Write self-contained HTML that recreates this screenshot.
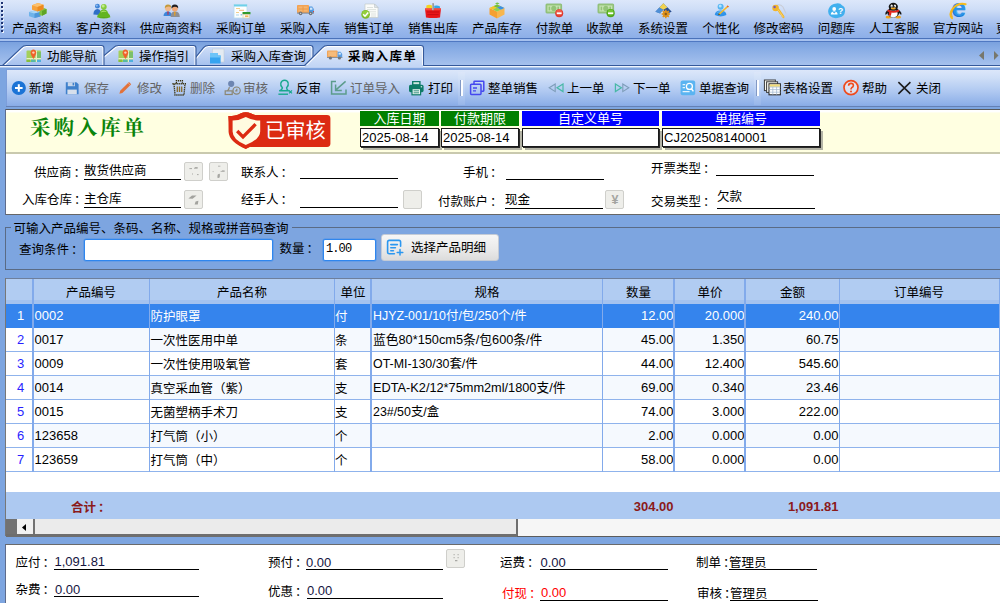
<!DOCTYPE html>
<html lang="zh-CN">
<head>
<meta charset="utf-8">
<title>采购入库单</title>
<style>
*{box-sizing:border-box;margin:0;padding:0}
html,body{width:1000px;height:603px;overflow:hidden}
body{position:relative;background:#7da5e0;font-family:"Liberation Sans","Noto Sans CJK SC",sans-serif;font-size:12.5px;color:#000;line-height:16px}
div,span,svg{position:absolute}
.t{white-space:nowrap;height:16px;line-height:16px}
.c{transform:translateX(-50%)}
.r{transform:translateX(-100%)}
#top{left:0;top:0;width:1000px;height:38px;background:linear-gradient(#dce7fa 0,#cfdef7 9px,#b3caf1 19px,#9bb9ec 28px,#8dafe8 38px)}
#tabbar{left:0;top:42px;width:1000px;height:25px;background:linear-gradient(#7aa1de 0,#86abe4 6px,#a7c2ee 24px)}
#tb2{left:5.5px;top:68.8px;width:994.5px;height:36.8px;background:linear-gradient(#dce7fa 0,#cedef7 8px,#b0c9f1 21px,#91b2e9 33px,#87aae5 36.6px);border-left:1px solid #7c9edb;border-top:1px solid #7c9edb}
.g{color:#646464}
.ul{height:1px;background:#000}
.sb{width:19.4px;height:19px;background:#eeeeea;border:1px solid #cfcfcb;border-radius:2px}
.hd{height:15px;color:#fff;text-align:center;line-height:15.4px;font-size:13px;overflow:hidden}
.in{height:19px;background:#fff;border:1px solid #1a1a1a;box-shadow:1px 1px 0 #2a2a2a, 3px 3px 0 #b4b4a6;font-size:13px;line-height:17px;padding-left:1px;white-space:nowrap}
.gl{background:#8fb3ec}
.n{font-size:13px}
i{position:static;font-style:normal;margin-left:2px}
</style>
</head>
<body>
<div id="top"></div>
<div style="left:0px;top:38px;width:1000px;height:1px;background:#4a72ba;"></div>
<div style="left:0px;top:39px;width:1000px;height:2px;background:#a6c1ee;"></div>
<div style="left:0px;top:41px;width:1000px;height:1px;background:#4f78c2;"></div>
<div style="left:2px;top:3px;width:2px;height:2px;background:#eef3fc;"></div>
<div style="left:1px;top:2px;width:2px;height:2px;background:#1f3474;"></div>
<div style="left:2px;top:7px;width:2px;height:2px;background:#eef3fc;"></div>
<div style="left:1px;top:6px;width:2px;height:2px;background:#1f3474;"></div>
<div style="left:2px;top:11px;width:2px;height:2px;background:#eef3fc;"></div>
<div style="left:1px;top:10px;width:2px;height:2px;background:#1f3474;"></div>
<div style="left:2px;top:15px;width:2px;height:2px;background:#eef3fc;"></div>
<div style="left:1px;top:14px;width:2px;height:2px;background:#1f3474;"></div>
<div style="left:2px;top:19px;width:2px;height:2px;background:#eef3fc;"></div>
<div style="left:1px;top:18px;width:2px;height:2px;background:#1f3474;"></div>
<div style="left:2px;top:23px;width:2px;height:2px;background:#eef3fc;"></div>
<div style="left:1px;top:22px;width:2px;height:2px;background:#1f3474;"></div>
<div style="left:2px;top:27px;width:2px;height:2px;background:#eef3fc;"></div>
<div style="left:1px;top:26px;width:2px;height:2px;background:#1f3474;"></div>
<div style="left:2px;top:31px;width:2px;height:2px;background:#eef3fc;"></div>
<div style="left:1px;top:30px;width:2px;height:2px;background:#1f3474;"></div>
<span class="t c" style="left:37px;top:21px;">产品资料</span>
<span class="t c" style="left:101px;top:21px;">客户资料</span>
<span class="t c" style="left:171px;top:21px;">供应商资料</span>
<span class="t c" style="left:241px;top:21px;">采购订单</span>
<span class="t c" style="left:305px;top:21px;">采购入库</span>
<span class="t c" style="left:369px;top:21px;">销售订单</span>
<span class="t c" style="left:433px;top:21px;">销售出库</span>
<span class="t c" style="left:497px;top:21px;">产品库存</span>
<span class="t c" style="left:554.5px;top:21px;">付款单</span>
<span class="t c" style="left:605px;top:21px;">收款单</span>
<span class="t c" style="left:663px;top:21px;">系统设置</span>
<span class="t c" style="left:721px;top:21px;">个性化</span>
<span class="t c" style="left:778.5px;top:21px;">修改密码</span>
<span class="t c" style="left:836.5px;top:21px;">问题库</span>
<span class="t c" style="left:894px;top:21px;">人工客服</span>
<span class="t c" style="left:958px;top:21px;">官方网站</span>
<span class="t " style="left:996px;top:21px;">更多</span>
<svg style="left:28px;top:2px" width="20" height="17" viewBox="0 0 20 17">
<path d="M1 10 L7 8.5 L12.5 10 L12.5 14.5 L6.5 16 L1 14.2Z" fill="#6fb3ea"/><path d="M1 10 L7 8.5 L12.5 10 L6.5 11.6Z" fill="#a8d6f7"/><path d="M6.5 11.6 L12.5 10 L12.5 14.5 L6.5 16Z" fill="#4f97d9"/>
<path d="M11.5 8 L16 6 L18.5 7 L18.5 11.5 L14 13.8 L11.5 13Z" fill="#7fc241"/><path d="M14 9 L18.5 7 L18.5 11.5 L14 13.8Z" fill="#5fa427"/>
<path d="M4 3.2 L10 1 L15.5 2.8 L15.5 7.2 L9.5 9.6 L4 7.8Z" fill="#f6a23c"/><path d="M4 3.2 L10 1 L15.5 2.8 L9.5 5Z" fill="#fbc06e"/><path d="M9.5 5 L15.5 2.8 L15.5 7.2 L9.5 9.6Z" fill="#ec8a1e"/>
</svg>
<svg style="left:92px;top:2px" width="20" height="17" viewBox="0 0 20 17">
<circle cx="5.4" cy="4.2" r="2.4" fill="#3f83d6"/><circle cx="4.8" cy="3.6" r="1.1" fill="#8ebcf0"/><path d="M1.4 12.4 Q1.6 7.2 5.4 7 Q7.8 7.2 8.4 9 L7.4 13Z" fill="#2f6fc6"/>
<circle cx="11.8" cy="4.8" r="2.9" fill="#86cb3c"/><circle cx="11.2" cy="4" r="1.5" fill="#c0ea8a"/>
<path d="M11.8 7.4 Q8.2 7.6 7.6 11 Q5 13 5 15.2 Q11.8 17.8 18.4 15.2 Q18.4 13 16 11 Q15.4 7.6 11.8 7.4Z" fill="#63b421"/><path d="M8.6 10.6 Q9.4 8.4 11.8 8.4 Q14 8.4 14.8 10 Q11.6 9.2 8.6 10.6Z" fill="#a9e06a"/><path d="M6 14.8 Q11.8 16.8 17.4 14.8 Q11.8 15.8 6 14.8Z" fill="#4a9614"/>
</svg>
<svg style="left:162px;top:3px" width="20" height="16" viewBox="0 0 20 16">
<path d="M1.5 13 Q1.8 8.4 6 8.4 Q9.6 8.4 10 13Z" fill="#3c86da"/>
<circle cx="6" cy="5.2" r="3" fill="#f0b98a"/><path d="M2.8 5.2 Q2.6 1.4 6 1.4 Q9.4 1.4 9.2 4.6 Q7 2.8 4.4 4 Z" fill="#c39a3c"/>
<path d="M5.2 8.6 L6.8 8.6 L6.4 12 L5.6 12Z" fill="#c2304a"/>
<path d="M8.6 14 Q8.8 8.6 13 8.6 Q17.6 8.6 17.8 14Z" fill="#8d8f94"/>
<circle cx="12.8" cy="5.6" r="3" fill="#f0a878"/><path d="M9.4 5.4 Q9.2 1.6 12.8 1.6 Q16.4 1.6 16.2 5.2 Q13.8 3.2 11 4.2Z" fill="#1f1f22"/>
<path d="M12 8.8 L13.6 8.8 L13.2 13 L12.4 13Z" fill="#e8a020"/>
</svg>
<svg style="left:233px;top:3px" width="18" height="16" viewBox="0 0 18 16">
<rect x="1" y="1.5" width="13" height="13.5" fill="#fdfefe" stroke="#b8dced" stroke-width=".8"/><rect x="1" y="1.5" width="13" height="2" fill="#6fd0ea"/>
<rect x="3" y="5" width="4" height="1" fill="#f3cf8c"/><rect x="6" y="6.8" width="5" height="1" fill="#f0b878"/><rect x="3" y="9" width="3" height="1" fill="#f3cf8c"/><rect x="3" y="11.5" width="3" height="1" fill="#a9d5ee"/><rect x="7.6" y="11" width="1.5" height="1.5" fill="#8ecbe8"/>
<rect x="9.5" y="9" width="8" height="2.4" rx=".6" fill="#2f9a2c"/><rect x="10" y="11.4" width="6.5" height="3.6" fill="#fbfbf3" stroke="#d9c89c" stroke-width=".6"/><rect x="12" y="12.4" width="3.4" height="1.6" fill="#f2b45c"/>
</svg>
<svg style="left:296px;top:4px" width="19" height="12" viewBox="0 0 19 12">
<rect x="1" y="1" width="12" height="8" rx=".8" fill="#f2a253"/><rect x="2.4" y="2.4" width="9.2" height="5.2" fill="#f6b56f"/><path d="M2.4 5 H11.6 M7 2.4 V7.6" stroke="#ea9540" stroke-width=".8"/>
<path d="M13 2.6 H16.2 L17.8 5 V9 H13Z" fill="#4f97e0"/><rect x="14" y="3.6" width="2.4" height="2.2" fill="#cfe6fb"/><rect x="17" y="7" width="1" height="1.2" fill="#e2452f"/>
<rect x="1" y="8.6" width="17" height="1" fill="#7c8794"/><circle cx="4.6" cy="9.4" r="1.8" fill="#6f7378"/><circle cx="14.6" cy="9.4" r="1.8" fill="#6f7378"/><circle cx="4.6" cy="9.4" r=".7" fill="#c9cdd2"/><circle cx="14.6" cy="9.4" r=".7" fill="#c9cdd2"/>
</svg>
<svg style="left:360px;top:3px" width="20" height="16" viewBox="0 0 20 16">
<path d="M5 1 H14.5 L18 4.5 V14.5 H5Z" fill="#fbfcfa" stroke="#c4cbc8" stroke-width=".7"/><path d="M14.5 1 V4.5 H18Z" fill="#dfe5e8" stroke="#b4bdc3" stroke-width=".5"/>
<path d="M7 4.5 H13 M7 6.6 H16 M9 8.8 H16 M11 11 H16 M11 13 H16" stroke="#d9dfda" stroke-width=".9"/>
<circle cx="5.6" cy="11.4" r="4.3" fill="#7db92b"/><circle cx="5.6" cy="10.8" r="3.4" fill="#94cf3d"/><path d="M3.2 11.2 L5 13.2 L8.2 9.4" fill="none" stroke="#fff" stroke-width="1.5"/>
</svg>
<svg style="left:424px;top:2px" width="18" height="17" viewBox="0 0 18 17">
<path d="M2.2 6.4 L2.4 3.6 Q5 2.2 8 3.4 L8 6.4Z" fill="#f5d421"/><path d="M10.2 6.4 L10.2 3.8 Q13.4 2.8 16 4.4 L16 6.4Z" fill="#35a7e6"/>
<path d="M1 6.4 H17 L16 15.4 Q9 16.8 2 15.4Z" fill="#e8171b"/><path d="M1 6.4 H17 L16.8 8.2 H1.2Z" fill="#f64a3c"/><path d="M3 10 H15 M3.4 12.6 H14.6" stroke="#c90e12" stroke-width="1"/>
<rect x="8" y="1" width="2" height="7.4" rx=".8" fill="#8c9096"/><rect x="8.4" y="1" width=".8" height="7" fill="#c4c8cc"/>
</svg>
<svg style="left:488px;top:2px" width="18" height="17" viewBox="0 0 18 17">
<path d="M1.5 6 L9 9.4 L9 16.4 L1.5 12.6Z" fill="#f5a032"/><path d="M9 9.4 L16.5 6 L16.5 12.6 L9 16.4Z" fill="#f8b64e"/>
<path d="M1.5 6 L9 2.4 L16.5 6 L9 9.4Z" fill="#f2d548"/>
<path d="M5.4 4.2 L9 2.4 L12.4 4 L8.8 5.8Z" fill="#6fc13c"/><path d="M8.8 5.8 L12.4 4 L16.5 6 L12.8 7.8Z" fill="#3b8fe4"/><path d="M1.5 6 L5.4 4.2 L8.8 5.8 L5 7.6Z" fill="#f0c530"/><path d="M5 7.6 L8.8 5.8 L12.8 7.8 L9 9.4Z" fill="#8fd052"/>
<path d="M7 1.2 L9.4 .4 L11.6 1.4 L9.2 2.4Z" fill="#73c445"/>
</svg>
<svg style="left:545px;top:3px" width="19" height="15" viewBox="0 0 19 15"><rect x="1" y="1" width="15.6" height="9" rx=".8" fill="#9fcb86" stroke="#82b566" stroke-width=".8"/><rect x="2.5" y="2.6" width="12.6" height="5.8" fill="#c8e4b4"/><ellipse cx="8.8" cy="5.5" rx="2.6" ry="2.8" fill="#93c478"/><rect x="3.6" y="3.6" width="1.6" height="3.8" fill="#93c478"/><rect x="12.4" y="3.6" width="1.6" height="3.8" fill="#93c478"/><circle cx="14.2" cy="10.2" r="4" fill="#e0382c"/><circle cx="14.2" cy="9.6" r="3" fill="#ee5a48"/><rect x="11.8" y="9.4" width="4.8" height="1.7" fill="#fff"/></svg>
<svg style="left:597px;top:3px" width="19" height="15" viewBox="0 0 19 15"><rect x="1" y="1" width="15.6" height="9" rx=".8" fill="#9fcb86" stroke="#82b566" stroke-width=".8"/><rect x="2.5" y="2.6" width="12.6" height="5.8" fill="#c8e4b4"/><ellipse cx="8.8" cy="5.5" rx="2.6" ry="2.8" fill="#93c478"/><rect x="3.6" y="3.6" width="1.6" height="3.8" fill="#93c478"/><rect x="12.4" y="3.6" width="1.6" height="3.8" fill="#93c478"/><circle cx="13.6" cy="10.2" r="4.1" fill="#4fa51c"/><circle cx="13.6" cy="9.6" r="3" fill="#74c634"/><rect x="11" y="9.4" width="5.2" height="1.7" fill="#fff"/></svg>
<svg style="left:654px;top:2px" width="19" height="17" viewBox="0 0 19 17">
<path d="M9.4 1.2 L17.6 9.8 L9.4 12.6 L1.4 9.8Z" fill="#3f6fb4"/>
<path d="M9.4 1.2 L13.4 5.4 L9.4 8 L5.4 5.4Z" fill="#f2d34e"/><path d="M5.4 5.4 L9.4 8 L6 11.4 L1.4 9.8Z" fill="#4f8fd6"/><path d="M13.4 5.4 L17.6 9.8 L12.6 11.4 L9.4 8Z" fill="#2d4f8e"/><path d="M9.4 8 L12.6 11.4 L9.4 12.6 L6 11.4Z" fill="#d9dde6"/>
<circle cx="11.8" cy="12" r="3.1" fill="#e0921c"/><path d="M11.8 7.8 V16.2 M7.6 12 H16 M8.8 9 L14.8 15 M14.8 9 L8.8 15" stroke="#e0921c" stroke-width="1.5"/><circle cx="11.8" cy="12" r="1.2" fill="#8a5a18"/>
</svg>
<svg style="left:713px;top:3px" width="17" height="15" viewBox="0 0 17 15">
<circle cx="7.6" cy="3.8" r="3" fill="#52b4f2"/><circle cx="7.2" cy="3" r="1.5" fill="#b5e2fb"/>
<path d="M1.8 12 Q2 7.4 7.6 7.4 Q13.2 7.4 13.4 12 Q7.6 14.8 1.8 12Z" fill="#2f93ea"/><path d="M3.4 10 Q4.4 8.2 7.6 8.2 Q10 8.2 11 9.2 Q7 8.8 3.4 10Z" fill="#7cc6f6"/>
<path d="M14.6 2.4 L15.8 3.6 L7 11.6 L5.2 12.2 L5.8 10.4Z" fill="#f4b928"/><path d="M14.6 2.4 L15.8 3.6 L15 4.4 L13.8 3.2Z" fill="#e8552e"/><path d="M5.8 10.4 L7 11.6 L5.2 12.2Z" fill="#3b3320"/>
</svg>
<svg style="left:770px;top:3px" width="17" height="16" viewBox="0 0 17 16">
<path d="M6 2.4 Q10 .6 13 4 L16 10.4" fill="none" stroke="#c9ccd6" stroke-width="1.1"/>
<circle cx="5.6" cy="5" r="3.3" fill="#f2b52a"/><circle cx="4.6" cy="4" r="1.2" fill="#7c5ab8"/>
<path d="M7 6.8 L9 5.4 L14.4 13.2 L14.2 15.2 L12.4 15 L12.6 13.8 L11.2 13.6 L11.4 12 L10 11.6Z" fill="#f2b52a"/><path d="M8 6.6 L13.4 14.2" stroke="#f8d878" stroke-width=".8"/>
</svg>
<svg style="left:827px;top:2px" width="19" height="17" viewBox="0 0 19 17">
<path d="M9.4 1.4 Q13.4 .8 15.2 3.6 Q18.6 5.2 18 9.6 Q17.6 14.4 12.4 15.6 Q6.4 17.2 3 14 Q0 10.6 1.8 6.4 Q3.6 1.8 9.4 1.4Z" fill="#41b0ee"/>
<circle cx="7.2" cy="7" r="1.9" fill="#fff"/><path d="M3.8 12.4 Q3.8 9.4 7.2 9.4 Q10.6 9.4 10.6 12.4Z" fill="#fff"/><path d="M5.6 10 L7.2 11.4 L8.8 10Z" fill="#41b0ee"/>
<text x="11" y="12.4" font-family="Liberation Sans" font-weight="bold" font-size="8.5" fill="#fff">?</text>
</svg>
<svg style="left:884px;top:2px" width="19" height="17" viewBox="0 0 19 17">
<ellipse cx="4.4" cy="15.2" rx="2.8" ry="1.4" fill="#f3a41c"/><ellipse cx="14.2" cy="15.2" rx="2.8" ry="1.4" fill="#f3a41c"/>
<path d="M3.2 8 Q.8 10.6 1.6 13 Q3 12.2 4.2 10Z" fill="#161616"/><path d="M15.4 8 Q18 10.6 17.2 13 Q15.6 12.2 14.6 10Z" fill="#161616"/>
<ellipse cx="9.3" cy="10.4" rx="5.9" ry="5.2" fill="#151515"/><ellipse cx="9.3" cy="11.6" rx="4.3" ry="3.8" fill="#fdfdfd"/>
<ellipse cx="9.3" cy="4.8" rx="4.6" ry="4" fill="#151515"/>
<ellipse cx="7.7" cy="4" rx="1.1" ry="1.5" fill="#fff"/><ellipse cx="10.9" cy="4" rx="1.1" ry="1.5" fill="#fff"/><circle cx="8" cy="4.2" r=".5" fill="#111"/><circle cx="10.6" cy="4.2" r=".5" fill="#111"/>
<ellipse cx="9.3" cy="6.5" rx="2.5" ry=".9" fill="#f3a41c"/>
<path d="M3.8 7.6 Q9.3 10.4 14.8 7.6 L15.2 9.4 Q9.3 12.2 3.4 9.4Z" fill="#e1241c"/><path d="M5.2 9.6 L7.6 10.4 L6.8 14 L4.6 13Z" fill="#e1241c"/>
</svg>
<svg style="left:949px;top:2px" width="19" height="18" viewBox="0 0 19 18">
<text x="2.2" y="15" font-family="Liberation Sans,sans-serif" font-weight="bold" font-size="26.5" fill="#1878d8">e</text>
<text x="3.4" y="14" font-family="Liberation Sans,sans-serif" font-weight="bold" font-size="24" fill="#39a8f2" opacity=".6">e</text>
<path d="M3 16.2 Q-.4 12.2 3.6 6.8 Q9 .4 16.6 2.2" fill="none" stroke="#f5bb1c" stroke-width="2" stroke-linecap="round"/>
<path d="M3.4 15.2 Q1 12 4.4 7.4" fill="none" stroke="#e9a010" stroke-width=".8"/>
</svg>
<div id="tabbar"></div>
<svg style="left:0;top:41px" width="1000" height="28" viewBox="0 0 1000 28"><defs><linearGradient id="ti" x1="0" y1="0" x2="0" y2="1"><stop offset="0" stop-color="#d0dff8"/><stop offset="1" stop-color="#a6c1ee"/></linearGradient><linearGradient id="ta" x1="0" y1="0" x2="0" y2="1"><stop offset="0" stop-color="#e6eefc"/><stop offset="1" stop-color="#c3d6f5"/></linearGradient></defs><path d="M189 24.5 L203.5 6.7 Q205.4 4.5 208.4 4.5 L310.5 4.5 Q313 4.5 313 7 L313 24.5 Z" fill="url(#ti)" stroke="none"/><path d="M190.6 24.5 L204.4 7.5 Q206 5.5 208.6 5.5 L310.4 5.5 Q312 5.5 312 7.5 L312 24.5" fill="none" stroke="#fff" stroke-width="1.1"/><path d="M189 24.5 L203.5 6.7 Q205.4 4.5 208.4 4.5 L310.5 4.5 Q313 4.5 313 7 L313 24.5" fill="none" stroke="#35599b" stroke-width="1.1"/><path d="M92 24.5 L113.5 6.7 Q115.4 4.5 118.4 4.5 L193.5 4.5 Q196 4.5 196 7 L196 24.5 Z" fill="url(#ti)" stroke="none"/><path d="M93.6 24.5 L114.4 7.5 Q116 5.5 118.6 5.5 L193.4 5.5 Q195 5.5 195 7.5 L195 24.5" fill="none" stroke="#fff" stroke-width="1.1"/><path d="M92 24.5 L113.5 6.7 Q115.4 4.5 118.4 4.5 L193.5 4.5 Q196 4.5 196 7 L196 24.5" fill="none" stroke="#35599b" stroke-width="1.1"/><path d="M2.5 24.5 L21.5 6.7 Q23.4 4.5 26.4 4.5 L101.5 4.5 Q104 4.5 104 7 L104 24.5 Z" fill="url(#ti)" stroke="none"/><path d="M4.1 24.5 L22.4 7.5 Q24 5.5 26.6 5.5 L101.4 5.5 Q103 5.5 103 7.5 L103 24.5" fill="none" stroke="#fff" stroke-width="1.1"/><path d="M2.5 24.5 L21.5 6.7 Q23.4 4.5 26.4 4.5 L101.5 4.5 Q104 4.5 104 7 L104 24.5" fill="none" stroke="#35599b" stroke-width="1.1"/><rect x="0" y="24" width="1000" height="1.1" fill="#35599b"/><rect x="0" y="25.1" width="1000" height="1.3" fill="#f8fbff"/><path d="M304.5 24.5 L322.5 6.7 Q324.4 4.5 327.4 4.5 L421 4.5 Q423.5 4.5 423.5 7 L423.5 24.5 Z" fill="url(#ta)" stroke="none"/><path d="M306.1 24.5 L323.4 7.5 Q325 5.5 327.6 5.5 L420.9 5.5 Q422.5 5.5 422.5 7.5 L422.5 24.5" fill="none" stroke="#fff" stroke-width="1.1"/><path d="M304.5 24.5 L322.5 6.7 Q324.4 4.5 327.4 4.5 L421 4.5 Q423.5 4.5 423.5 7 L423.5 24.5" fill="none" stroke="#35599b" stroke-width="1.1"/><path d="M306.2 24 H423 V26.4 H304 Z" fill="#c3d6f5"/><path d="M984 10 L979 14.5 L984 19Z" fill="#77776c"/><path d="M994 10 L998.5 14.5 L994 19Z" fill="#77776c"/></svg>
<svg style="left:26px;top:49px" width="16" height="14" viewBox="0 0 16 14"><rect x=".5" y="1.5" width="14.5" height="11.5" rx="1" fill="#a4cf5a"/><rect x=".5" y="9" width="14.5" height="1.6" fill="#e9efc4"/><rect x="9.6" y="1.5" width="1.4" height="11.5" fill="#e9efc4"/><rect x="11" y="3" width="4" height="6" fill="#7cc06a"/><rect x="11" y="10.6" width="4" height="2.4" fill="#4fb0de"/><rect x="5" y="10.6" width="4.6" height="2.4" fill="#58b9a4"/><rect x=".5" y="10.6" width="3.5" height="2.4" fill="#86bf3e"/>
<path d="M7.4 10 Q4.4 5.4 4.6 3.6 Q5 .6 7.4 .6 Q9.8 .6 10.2 3.6 Q10.4 5.4 7.4 10Z" fill="#f0612a"/><circle cx="7.4" cy="3.6" r="1.2" fill="#fbd2b4"/></svg>
<svg style="left:118px;top:49px" width="16" height="14" viewBox="0 0 16 14"><rect x=".5" y="1.5" width="14.5" height="11.5" rx="1" fill="#a4cf5a"/><rect x=".5" y="9" width="14.5" height="1.6" fill="#e9efc4"/><rect x="9.6" y="1.5" width="1.4" height="11.5" fill="#e9efc4"/><rect x="11" y="3" width="4" height="6" fill="#7cc06a"/><rect x="11" y="10.6" width="4" height="2.4" fill="#4fb0de"/><rect x="5" y="10.6" width="4.6" height="2.4" fill="#58b9a4"/><rect x=".5" y="10.6" width="3.5" height="2.4" fill="#86bf3e"/>
<path d="M7.4 10 Q4.4 5.4 4.6 3.6 Q5 .6 7.4 .6 Q9.8 .6 10.2 3.6 Q10.4 5.4 7.4 10Z" fill="#f0612a"/><circle cx="7.4" cy="3.6" r="1.2" fill="#fbd2b4"/></svg>
<svg style="left:209px;top:48px" width="16" height="16" viewBox="0 0 16 16"><rect x="3.4" y="1" width="11.6" height="13" fill="#e4ebf2" stroke="#c2ccd6" stroke-width=".6"/><path d="M1 5 H8.6 V7.4 H11.6 V15.6 H1Z" fill="#36a4f0"/><path d="M1 5 H8.6 V7.4 H11.6 V9.6 H1Z" fill="#6cc4f8"/></svg>
<svg style="left:326px;top:49px" width="18" height="12" viewBox="0 0 18 12"><rect x="1" y="1.4" width="10.6" height="7" rx=".8" fill="#f0a458"/><rect x="2.2" y="2.6" width="8.2" height="4.6" fill="#f6bb7a"/><path d="M11.6 2.8 H14.6 L16.2 5 V8.4 H11.6Z" fill="#5a9de2"/><rect x="12.6" y="3.8" width="2.2" height="1.8" fill="#d8eafb"/><rect x="1" y="8" width="15.4" height=".9" fill="#858c96"/><circle cx="4.4" cy="9" r="1.6" fill="#70757c"/><circle cx="13.4" cy="9" r="1.6" fill="#70757c"/></svg>
<span class="t " style="left:47px;top:49px;">功能导航</span>
<span class="t " style="left:139px;top:49px;">操作指引</span>
<span class="t " style="left:231px;top:49px;">采购入库查询</span>
<span class="t " style="left:348px;top:49px;font-weight:bold;letter-spacing:1.3px">采购入库单</span>
<div id="tb2"></div>
<div style="left:6px;top:105.6px;width:994px;height:1.1px;background:#6480b4;"></div>
<span class="t " style="left:29px;top:81px;">新增</span>
<span class="t g" style="left:84px;top:81px;">保存</span>
<span class="t g" style="left:137px;top:81px;">修改</span>
<span class="t g" style="left:190px;top:81px;">删除</span>
<span class="t g" style="left:243px;top:81px;">审核</span>
<span class="t " style="left:296px;top:81px;">反审</span>
<span class="t g" style="left:350px;top:81px;">订单导入</span>
<span class="t " style="left:428px;top:81px;">打印</span>
<span class="t " style="left:488px;top:81px;">整单销售</span>
<span class="t " style="left:567px;top:81px;">上一单</span>
<span class="t " style="left:633px;top:81px;">下一单</span>
<span class="t " style="left:699px;top:81px;">单据查询</span>
<span class="t " style="left:783px;top:81px;">表格设置</span>
<span class="t " style="left:862px;top:81px;">帮助</span>
<span class="t " style="left:916px;top:81px;">关闭</span>
<div style="left:458px;top:72px;width:7px;height:33px;background:rgba(255,255,255,.10);"></div>
<div style="left:460px;top:80px;width:1px;height:15.5px;background:#8199c6;"></div>
<div style="left:461px;top:80px;width:1.7px;height:15.5px;background:#fbfdff;"></div>
<div style="left:754px;top:72px;width:7px;height:33px;background:rgba(255,255,255,.10);"></div>
<div style="left:756px;top:80px;width:1px;height:15.5px;background:#8199c6;"></div>
<div style="left:757px;top:80px;width:1.7px;height:15.5px;background:#fbfdff;"></div>
<svg style="left:11px;top:80px" width="16" height="16" viewBox="0 0 16 16"><circle cx="7.8" cy="8" r="7.1" fill="#1b73d6"/><path d="M7.8 4.2 V11.8 M4 8 H11.6" stroke="#fff" stroke-width="2"/></svg>
<svg style="left:65px;top:81px" width="15" height="14" viewBox="0 0 15 14"><path d="M.8 1.2 H11.4 L13.6 3.2 V13.2 H.8Z" fill="#3f80cb"/><rect x="2.8" y="1.2" width="7.2" height="4" fill="#c7d6ea"/><rect x="2.4" y="8.6" width="9.4" height="4.6" fill="#d6dfec"/><rect x="7.6" y="1.8" width="1.6" height="2.6" fill="#3f80cb"/></svg>
<svg style="left:118px;top:81px" width="15" height="14" viewBox="0 0 15 14"><path d="M11 1 L13.2 3.2 L4.4 12 L1.4 12.8 L2.2 9.8Z" fill="#e2723a"/><path d="M10 2 L12.2 4.2" stroke="#f3a079" stroke-width=".8"/></svg>
<svg style="left:171px;top:79px" width="17" height="17" viewBox="0 0 17 17"><g fill="none" stroke="#3a3312" stroke-width="1.35" stroke-dasharray="1.3 .75"><path d="M1.4 4.7 H15.6"/><path d="M5.4 4.4 V1.7 H11.4 V4.4"/><path d="M3 5 L4 16 H13 L14 5"/></g><path d="M6.3 7.6 V13 M8.5 7.6 V13 M10.7 7.6 V13" stroke="#8a6c2c" stroke-width="1.3" fill="none"/></svg>
<svg style="left:223px;top:80px" width="18" height="16" viewBox="0 0 18 16"><circle cx="8.2" cy="3.8" r="3.1" fill="#6d86b2"/><g fill="none" stroke="#8b8672" stroke-width="1.2"><path d="M6.4 7.2 Q6 9.6 4.4 10.8"/><rect x="2.2" y="10.9" width="7" height="3.6"/><circle cx="13.6" cy="10.6" r="3.6"/><path d="M13.8 8.8 V10.9 H12.2"/></g></svg>
<svg style="left:277px;top:79px" width="17" height="17" viewBox="0 0 17 17"><g fill="none" stroke="#18a88e" stroke-width="1.4"><path d="M5.4 8.8 Q3.2 6.8 3.8 4.2 Q4.6 1.2 7.6 1.2 Q10.6 1.2 11.2 4.2 Q11.8 6.8 9.6 8.8 Q9.6 10.6 11.4 11.8 H2.2 Q5.2 10.8 5.4 8.8Z"/><path d="M1.4 15.2 H11"/><path d="M12 11.4 L15 14.4 M15 11.4 L12 14.4" stroke-width="1.1"/></g></svg>
<svg style="left:330px;top:80px" width="18" height="16" viewBox="0 0 18 16"><g fill="none" stroke="#5c9c8c" stroke-width="1.5"><path d="M6 1.6 H1.6 V14 H16 V9.4"/><path d="M15.6 1.4 L6.2 9.6 M5.6 4.6 V10.4 H11.8"/></g></svg>
<svg style="left:408px;top:80px" width="17" height="16" viewBox="0 0 17 16"><rect x="4" y="1" width="8.6" height="4" fill="#0f7b67"/><rect x="5.4" y="2.2" width="5.8" height="2" fill="#cfe6df"/><rect x="1" y="4.8" width="14.6" height="7.4" rx="1.6" fill="#0f7b67"/><rect x="4" y="8.6" width="8.6" height="6.2" fill="#e6f2ee" stroke="#0f7b67" stroke-width="1.2"/><path d="M5.6 10.8 H11 M5.6 12.8 H11" stroke="#0f7b67" stroke-width=".8"/><circle cx="13.4" cy="6.8" r=".8" fill="#cfe6df"/></svg>
<svg style="left:469px;top:80px" width="17" height="16" viewBox="0 0 17 16"><g fill="none" stroke="#4548ee" stroke-width="1.5"><path d="M5 4 V1.8 Q5 1.2 5.6 1.2 H14.2 Q14.8 1.2 14.8 1.8 V10.6 Q14.8 11.2 14.2 11.2 H12.2"/><rect x="1.6" y="4.2" width="10.4" height="10.2" rx=".8"/><path d="M4 8 H8 M4 10.8 H7" stroke-width="1.3"/></g></svg>
<svg style="left:548px;top:83px" width="17" height="10" viewBox="0 0 17 10"><path d="M7.2 1 V8.6 L1.2 4.8Z" fill="none" stroke="#7d9cb8" stroke-width="1.1"/><path d="M15 1 V8.6 L9 4.8Z" fill="none" stroke="#48b8a6" stroke-width="1.2"/></svg>
<svg style="left:614px;top:83px" width="17" height="10" viewBox="0 0 17 10"><path d="M1.4 1 V8.6 L7.4 4.8Z" fill="none" stroke="#48b8a6" stroke-width="1.2"/><path d="M8.8 1 V8.6 L14.8 4.8Z" fill="none" stroke="#7d9cb8" stroke-width="1.1"/></svg>
<svg style="left:680px;top:80px" width="16" height="16" viewBox="0 0 16 16"><rect x=".6" y=".4" width="14.6" height="14.8" rx="2" fill="#5bb4f1"/><circle cx="9.4" cy="6.4" r="3" fill="none" stroke="#fff" stroke-width="1.3"/><path d="M11.4 8.8 L13.4 11.4" stroke="#fff" stroke-width="1.4"/><path d="M2.6 4.6 H5.2 M2.6 7.6 H5 M2.6 11.6 H9.6" stroke="#e6f4fd" stroke-width="1.1"/></svg>
<svg style="left:763px;top:79px" width="19" height="17" viewBox="0 0 19 17"><rect x="1.4" y="1" width="11" height="10.6" fill="#f7f7ef" stroke="#3a3a3a" stroke-width="1"/><rect x="3.6" y="2.8" width="11" height="10.6" fill="#fafaf2" stroke="#3a3a3a" stroke-width="1"/><rect x="6" y="4.8" width="11.4" height="11" fill="#fff" stroke="#2e2e2e" stroke-width="1.1"/><rect x="6.6" y="5.4" width="10.2" height="2.4" fill="#f3dc7a"/><path d="M6 8 H17.4 M6 10.6 H17.4 M6 13.2 H17.4 M9.8 8 V15.8 M13.6 8 V15.8" stroke="#9fb6cf" stroke-width=".7"/></svg>
<svg style="left:842px;top:79px" width="18" height="17" viewBox="0 0 18 17"><circle cx="9" cy="8.6" r="7" fill="#fdf3ee" fill-opacity=".55" stroke="#f04a1c" stroke-width="1.7"/><path d="M6.6 6.8 Q6.6 4.4 9 4.4 Q11.4 4.4 11.4 6.6 Q11.4 8 9.6 8.8 Q9 9.2 9 10.4" fill="none" stroke="#f04a1c" stroke-width="1.6"/><circle cx="9" cy="12.6" r="1" fill="#f04a1c"/></svg>
<svg style="left:897px;top:81px" width="15" height="14" viewBox="0 0 15 14"><path d="M1.4 1.2 L13.4 12.8 M13.4 1.2 L1.4 12.8" stroke="#1c1c1c" stroke-width="1.6"/></svg>
<div style="left:5px;top:109px;width:995px;height:1.1px;background:#585858;"></div>
<div style="left:5px;top:110px;width:995px;height:2.6px;background:#fff;"></div>
<div style="left:5px;top:111.6px;width:995px;height:41px;background:linear-gradient(#fffff4,#ffffe1 1.6px);"></div>
<div style="left:5px;top:152.3px;width:995px;height:1.9px;background:#c9c9ae;"></div>
<span class="t " style="left:30px;top:120px;font-family:'Liberation Serif','Noto Serif CJK SC',serif;font-weight:700;font-size:20.5px;letter-spacing:2.9px;color:#0a840a;line-height:26px;height:26px;top:115px">采购入库单</span>
<svg style="left:226px;top:110px" width="108" height="42" viewBox="0 0 108 42">
<rect x="22" y="5" width="82.4" height="32" rx="3.4" fill="#dc2b12"/>
<path d="M19.8 2.2 Q22.4 2.2 25.2 3.4 Q30 6 35.6 6 L35.6 22 Q35.4 31.6 19.8 38.8 Q4.2 31.6 4 22 L2.4 6 Q9.6 6 14.4 3.4 Q17.2 2.2 19.8 2.2Z" fill="#dc2b12"/>
<path d="M2.4 6 Q9.6 6 14.4 3.4 Q17.2 2.2 19.8 2.2 Q22.4 2.2 25.2 3.4 Q30 6 36.6 6 L36.6 22 Q36.2 32 19.8 39 Q3.2 32 2.6 22Z" fill="#dc2b12"/>
<path d="M19.8 7 Q26 10.4 34.2 10.6 L34.2 21.4 Q34 29.4 19.8 35 Q6.6 29.4 6.6 21.4 L6.6 10.6 Q13.6 10.4 19.8 7Z" fill="#fffbe0"/>
<path d="M11.2 21 L17 27 L29.6 14.2" fill="none" stroke="#dc2b12" stroke-width="3.3"/>
<text x="39" y="28" font-family="'Liberation Sans','Noto Sans CJK SC',sans-serif" font-weight="400" font-size="20.2" fill="#fff" letter-spacing="0">已审核</text>
</svg>
<div class="hd" style="left:360px;top:111px;width:79px;background:#008000">入库日期</div>
<div class="hd" style="left:441px;top:111px;width:78px;background:#008000">付款期限</div>
<div class="hd" style="left:522px;top:111px;width:137px;background:#0000ff">自定义单号</div>
<div class="hd" style="left:662px;top:111px;width:158px;background:#0000ff">单据编号</div>
<div class="in" style="left:360px;top:128px;width:79px">2025-08-14</div>
<div class="in" style="left:441px;top:128px;width:78px">2025-08-14</div>
<div class="in" style="left:522px;top:128px;width:137px"></div>
<div class="in" style="left:662px;top:128px;width:158px">CJ202508140001</div>
<div style="left:5px;top:154.1px;width:995px;height:59.8px;background:#fff;"></div>
<div style="left:5px;top:213.8px;width:995px;height:1.1px;background:#666;"></div>
<div style="left:5px;top:109px;width:1.2px;height:105.5px;background:#5e6c8c;"></div>
<span class="t" style="left:34px;top:165px;color:#000">供应商<i>：</i></span>
<span class="t" style="left:84px;top:163px;color:#000">散货供应商</span>
<div style="left:84px;top:179px;width:97px;height:1px;background:#000;"></div>
<span class="t" style="left:22px;top:192px;color:#000">入库仓库<i>：</i></span>
<span class="t" style="left:84px;top:191px;color:#000">主仓库</span>
<div style="left:84px;top:207px;width:97px;height:1px;background:#000;"></div>
<span class="t" style="left:241px;top:165px;color:#000">联系人<i>：</i></span>
<div style="left:300px;top:178px;width:98px;height:1px;background:#000;"></div>
<span class="t" style="left:241px;top:192px;color:#000">经手人<i>：</i></span>
<div style="left:300px;top:207px;width:98px;height:1px;background:#000;"></div>
<span class="t" style="left:463px;top:165px;color:#000">手机<i>：</i></span>
<div style="left:506px;top:179px;width:98px;height:1px;background:#000;"></div>
<span class="t" style="left:438px;top:194px;color:#000">付款账户<i>：</i></span>
<span class="t" style="left:505px;top:192px;color:#000">现金</span>
<div style="left:505px;top:208px;width:98px;height:1px;background:#000;"></div>
<span class="t" style="left:651px;top:161px;color:#000">开票类型<i>：</i></span>
<div style="left:716px;top:175px;width:98px;height:1px;background:#000;"></div>
<span class="t" style="left:651px;top:193.5px;color:#000">交易类型<i>：</i></span>
<span class="t" style="left:717px;top:189px;color:#000">欠款</span>
<div style="left:717px;top:208px;width:98px;height:1px;background:#000;"></div>
<div class="sb" style="left:184px;top:162px"></div>
<div class="sb" style="left:209px;top:162px"></div>
<div class="sb" style="left:184px;top:190px"></div>
<div class="sb" style="left:403px;top:190px"></div>
<div class="sb" style="left:605px;top:190px"></div>
<!--SBICONS-->
<div style="left:5px;top:227px;width:995px;height:1px;background:#5a6b85;"></div>
<div style="left:5px;top:269px;width:995px;height:1px;background:#5a6b85;"></div>
<div style="left:5px;top:227px;width:1px;height:43px;background:#5a6b85;"></div>
<span class="t" style="left:10.5px;top:220.5px;background:#7da5e0;padding:0 3px">可输入产品编号、条码、名称、规格或拼音码查询</span>
<span class="t " style="left:19px;top:241.5px;">查询条件<i>：</i></span>
<div style="left:84px;top:239px;width:189px;height:22px;background:#fff;border:1px solid #2f86ee;border-radius:2px;box-shadow:0 0 0 .6px rgba(47,134,238,.55)"></div>
<span class="t " style="left:279.5px;top:241px;">数量<i>：</i></span>
<div style="left:323px;top:239px;width:53px;height:22px;background:#fff;border:1px solid #2f86ee;border-radius:2px;box-shadow:0 0 0 .6px rgba(47,134,238,.55)"></div>
<span class="t " style="left:326px;top:241px;font-family:'Liberation Mono',monospace;font-size:12px;letter-spacing:-.9px">1.00</span>
<div style="left:381px;top:234px;width:118px;height:27px;background:linear-gradient(#f6f6f6,#e9e9e9 60%,#dcdcdc);border:1px solid #c4cbd6;border-radius:3px"></div>
<span class="t " style="left:411px;top:240px;">选择产品明细</span>
<svg style="left:386px;top:239px" width="19" height="17" viewBox="0 0 19 17"><g fill="none" stroke="#2b97f0" stroke-width="1.6" stroke-linecap="round"><path d="M14.6 7.2 V3 Q14.6 1.4 13 1.4 H3.2 Q1.6 1.4 1.6 3 V13.2 Q1.6 14.8 3.2 14.8 H8.4"/><path d="M4.8 5.6 H11.4 M4.8 8.8 H9.4 M4.8 11.8 H7.4"/><path d="M14 10.6 V16 M11.2 13.4 H16.8" stroke-width="1.5"/></g></svg>
<div style="left:5px;top:278px;width:995px;height:258px;background:#fff;"></div>
<div style="left:5px;top:278px;width:995px;height:1px;background:#6e7f9c;"></div>
<div style="left:5px;top:278px;width:1px;height:258px;background:#777;"></div>
<div style="left:6px;top:279px;width:994px;height:21px;background:#b1ccf2;"></div>
<div style="left:6px;top:300px;width:994px;height:4px;background:#a4c2ef;"></div>
<span class="t c" style="left:91px;top:285px;">产品编号</span>
<span class="t c" style="left:242px;top:285px;">产品名称</span>
<span class="t c" style="left:353px;top:285px;">单位</span>
<span class="t c" style="left:487px;top:285px;">规格</span>
<span class="t c" style="left:638.5px;top:285px;">数量</span>
<span class="t c" style="left:710px;top:285px;">单价</span>
<span class="t c" style="left:792.5px;top:285px;">金额</span>
<span class="t c" style="left:919px;top:285px;">订单编号</span>
<div style="left:6px;top:304px;width:994px;height:24px;background:#3584ed;"></div>
<span class="t c n" style="left:20.5px;top:308px;color:#fff">1</span>
<span class="t n" style="left:34.5px;top:308px;color:#fff">0002</span>
<span class="t" style="left:150.5px;top:309px;color:#fff">防护眼罩</span>
<span class="t" style="left:335px;top:309px;color:#fff">付</span>
<span class="t" style="font-size:12.4px;left:373px;top:308px;color:#fff">HJYZ-001/10付/包/250个/件</span>
<span class="t r n" style="left:673.5px;top:308px;color:#fff">12.00</span>
<span class="t r n" style="left:744.5px;top:308px;color:#fff">20.000</span>
<span class="t r n" style="left:838.5px;top:308px;color:#fff">240.00</span>
<div style="left:33px;top:328px;width:967px;height:23px;background:#f5f9fe;"></div>
<div style="left:6px;top:351px;width:994px;height:1px;background:#8fb3ec;"></div>
<span class="t c n" style="left:20.5px;top:332px;color:#2a1fff">2</span>
<span class="t n" style="left:34.5px;top:332px;color:#000">0017</span>
<span class="t" style="left:150.5px;top:333px;color:#000">一次性医用中单</span>
<span class="t" style="left:335px;top:333px;color:#000">条</span>
<span class="t" style="font-size:12.75px;left:373px;top:332px;color:#000">蓝色80*150cm5条/包600条/件</span>
<span class="t r n" style="left:673.5px;top:332px;color:#000">45.00</span>
<span class="t r n" style="left:744.5px;top:332px;color:#000">1.350</span>
<span class="t r n" style="left:838.5px;top:332px;color:#000">60.75</span>
<div style="left:6px;top:375px;width:994px;height:1px;background:#8fb3ec;"></div>
<span class="t c n" style="left:20.5px;top:356px;color:#2a1fff">3</span>
<span class="t n" style="left:34.5px;top:356px;color:#000">0009</span>
<span class="t" style="left:150.5px;top:357px;color:#000">一次性使用吸氧管</span>
<span class="t" style="left:335px;top:357px;color:#000">套</span>
<span class="t" style="font-size:12.4px;left:373px;top:356px;color:#000">OT-MI-130/30套/件</span>
<span class="t r n" style="left:673.5px;top:356px;color:#000">44.00</span>
<span class="t r n" style="left:744.5px;top:356px;color:#000">12.400</span>
<span class="t r n" style="left:838.5px;top:356px;color:#000">545.60</span>
<div style="left:33px;top:376px;width:967px;height:23px;background:#f5f9fe;"></div>
<div style="left:6px;top:399px;width:994px;height:1px;background:#8fb3ec;"></div>
<span class="t c n" style="left:20.5px;top:380px;color:#2a1fff">4</span>
<span class="t n" style="left:34.5px;top:380px;color:#000">0014</span>
<span class="t" style="left:150.5px;top:381px;color:#000">真空采血管（紫）</span>
<span class="t" style="left:335px;top:381px;color:#000">支</span>
<span class="t" style="font-size:12.75px;left:373px;top:380px;color:#000">EDTA-K2/12*75mm2ml/1800支/件</span>
<span class="t r n" style="left:673.5px;top:380px;color:#000">69.00</span>
<span class="t r n" style="left:744.5px;top:380px;color:#000">0.340</span>
<span class="t r n" style="left:838.5px;top:380px;color:#000">23.46</span>
<div style="left:6px;top:423px;width:994px;height:1px;background:#8fb3ec;"></div>
<span class="t c n" style="left:20.5px;top:404px;color:#2a1fff">5</span>
<span class="t n" style="left:34.5px;top:404px;color:#000">0015</span>
<span class="t" style="left:150.5px;top:405px;color:#000">无菌塑柄手术刀</span>
<span class="t" style="left:335px;top:405px;color:#000">支</span>
<span class="t" style="font-size:12.4px;left:373px;top:404px;color:#000">23#/50支/盒</span>
<span class="t r n" style="left:673.5px;top:404px;color:#000">74.00</span>
<span class="t r n" style="left:744.5px;top:404px;color:#000">3.000</span>
<span class="t r n" style="left:838.5px;top:404px;color:#000">222.00</span>
<div style="left:33px;top:424px;width:967px;height:23px;background:#f5f9fe;"></div>
<div style="left:6px;top:447px;width:994px;height:1px;background:#8fb3ec;"></div>
<span class="t c n" style="left:20.5px;top:428px;color:#2a1fff">6</span>
<span class="t n" style="left:34.5px;top:428px;color:#000">123658</span>
<span class="t" style="left:150.5px;top:429px;color:#000">打气筒（小）</span>
<span class="t" style="left:335px;top:429px;color:#000">个</span>
<span class="t r n" style="left:673.5px;top:428px;color:#000">2.00</span>
<span class="t r n" style="left:744.5px;top:428px;color:#000">0.000</span>
<span class="t r n" style="left:838.5px;top:428px;color:#000">0.00</span>
<div style="left:6px;top:471px;width:994px;height:1px;background:#8fb3ec;"></div>
<span class="t c n" style="left:20.5px;top:452px;color:#2a1fff">7</span>
<span class="t n" style="left:34.5px;top:452px;color:#000">123659</span>
<span class="t" style="left:150.5px;top:453px;color:#000">打气筒（中）</span>
<span class="t" style="left:335px;top:453px;color:#000">个</span>
<span class="t r n" style="left:673.5px;top:452px;color:#000">58.00</span>
<span class="t r n" style="left:744.5px;top:452px;color:#000">0.000</span>
<span class="t r n" style="left:838.5px;top:452px;color:#000">0.00</span>
<div style="left:32.3px;top:279px;width:1.4px;height:193px;background:#82aaeb;"></div>
<div style="left:148.5px;top:279px;width:1.4px;height:193px;background:#82aaeb;"></div>
<div style="left:333.7px;top:279px;width:1.4px;height:193px;background:#82aaeb;"></div>
<div style="left:370.3px;top:279px;width:1.4px;height:193px;background:#82aaeb;"></div>
<div style="left:601.7px;top:279px;width:1.4px;height:193px;background:#82aaeb;"></div>
<div style="left:673.2px;top:279px;width:1.4px;height:193px;background:#82aaeb;"></div>
<div style="left:744.4px;top:279px;width:1.4px;height:193px;background:#82aaeb;"></div>
<div style="left:838.6px;top:279px;width:1.4px;height:193px;background:#82aaeb;"></div>
<div style="left:998.6px;top:279px;width:1.4px;height:193px;background:#82aaeb;"></div>
<div style="left:6px;top:492px;width:994px;height:27px;background:#adc9f1;"></div>
<span class="t " style="left:71px;top:500px;color:#8b1a1a;font-weight:bold">合计<i>：</i></span>
<span class="t r n" style="left:673.5px;top:499px;color:#8b1a1a;font-weight:bold">304.00</span>
<span class="t r n" style="left:838.5px;top:499px;color:#8b1a1a;font-weight:bold">1,091.81</span>
<div style="left:6px;top:519px;width:994px;height:17px;background:#f6f6f6;"></div>
<div style="left:6px;top:519px;width:29px;height:17.8px;background:#727272;"></div>
<div style="left:17px;top:519px;width:16px;height:15px;background:#f1f1f1;"></div>
<svg style="left:21px;top:523px" width="7" height="9" viewBox="0 0 7 9"><path d="M5 1 L1 4.5 L5 8Z" fill="#000"/></svg>
<div style="left:35px;top:519px;width:481px;height:15px;background:#ebebeb;"></div>
<div style="left:516px;top:519px;width:1.6px;height:16px;background:#6e6e6e;"></div>
<div style="left:6px;top:534px;width:511.6px;height:2.8px;background:#6e6e6e;"></div>
<div style="left:517px;top:535.9px;width:483px;height:1px;background:#5c5c5c;"></div>
<div style="left:5px;top:544px;width:995px;height:59px;background:#fff;border-top:1px solid #6a6a6a;border-left:1.2px solid #5e6c8c"></div>
<span class="t" style="left:15.5px;top:555px;color:#000">应付<i>：</i></span>
<span class="t n" style="left:54.5px;top:554px;color:#15153f">1,091.81</span>
<div style="left:54px;top:568.6px;width:145px;height:1.2px;background:#000;"></div>
<span class="t" style="left:15.5px;top:582px;color:#000">杂费<i>：</i></span>
<span class="t n" style="left:55px;top:581.5px;color:#15153f">0.00</span>
<div style="left:54px;top:595.8px;width:144.5px;height:1.2px;background:#000;"></div>
<span class="t" style="left:268px;top:555px;color:#000">预付<i>：</i></span>
<span class="t n" style="left:306px;top:554.5px;color:#15153f">0.00</span>
<div style="left:305.5px;top:568.6px;width:137.5px;height:1.2px;background:#000;"></div>
<span class="t" style="left:268px;top:584px;color:#000">优惠<i>：</i></span>
<span class="t n" style="left:307px;top:583px;color:#15153f">0.00</span>
<div style="left:306.5px;top:597.8px;width:136.5px;height:1.2px;background:#000;"></div>
<span class="t" style="left:500px;top:555px;color:#000">运费<i>：</i></span>
<span class="t n" style="left:540.5px;top:554.5px;color:#15153f">0.00</span>
<div style="left:540px;top:568.6px;width:128px;height:1.2px;background:#000;"></div>
<span class="t" style="left:502px;top:586px;color:#f00">付现<i>：</i></span>
<span class="t n" style="left:541px;top:585px;color:#f00">0.00</span>
<div style="left:540px;top:599.7px;width:128px;height:1.2px;background:#000;"></div>
<span class="t" style="left:696px;top:555px;color:#000">制单<i>：</i></span>
<span class="t " style="left:729px;top:555px;color:#000">管理员</span>
<div style="left:729px;top:568.8px;width:88px;height:1.2px;background:#000;"></div>
<span class="t" style="left:697px;top:585.5px;color:#000">审核<i>：</i></span>
<span class="t " style="left:730px;top:585.5px;color:#000">管理员</span>
<div style="left:730px;top:600px;width:88px;height:1.2px;background:#000;"></div>
<div class="sb" style="left:446px;top:549px"></div>
<svg style="left:184px;top:162px" width="20" height="19" viewBox="0 0 20 19"><path d="M5.4 6.6 H8 M10 6.2 H13.6 M11 5.6 H13.6 M8 12 H9 M13 12.6 H14.6" stroke="#a8a8a4" stroke-width="1"/></svg>
<svg style="left:209px;top:162px" width="20" height="19" viewBox="0 0 20 19"><path d="M9 4.2 H11.4 M3.6 9.6 H4.6 M11.6 9.4 H15.6 M13 8.8 H15.6 M9 12.6 L10.6 12.2 L10.2 15.4 L8.8 15.6Z" stroke="#a6a6a2" stroke-width=".8" fill="#a6a6a2"/></svg>
<svg style="left:184px;top:190px" width="20" height="19" viewBox="0 0 20 19"><path d="M4.4 8.4 L8 5.6 L12.6 5.6 L8.6 8.8Z M11.6 11.4 L14.4 10.8 L13.8 14.4 L10.6 14.6Z" fill="#a2a29e"/></svg>
<svg style="left:605px;top:190px" width="20" height="19" viewBox="0 0 20 19"><text x="10" y="14.4" text-anchor="middle" font-family="Liberation Sans,sans-serif" font-weight="bold" font-size="12.5" fill="#a4a4a0">¥</text></svg>
<svg style="left:446px;top:549px" width="20" height="19" viewBox="0 0 20 19"><path d="M7.6 5.6 H8.6 M11.6 5.6 H12.6 M7.6 8.6 H8.6 M11.6 8.6 H12.6 M9 11.6 H11.4" stroke="#a8a8a4" stroke-width="1.1"/></svg>
</body>
</html>
